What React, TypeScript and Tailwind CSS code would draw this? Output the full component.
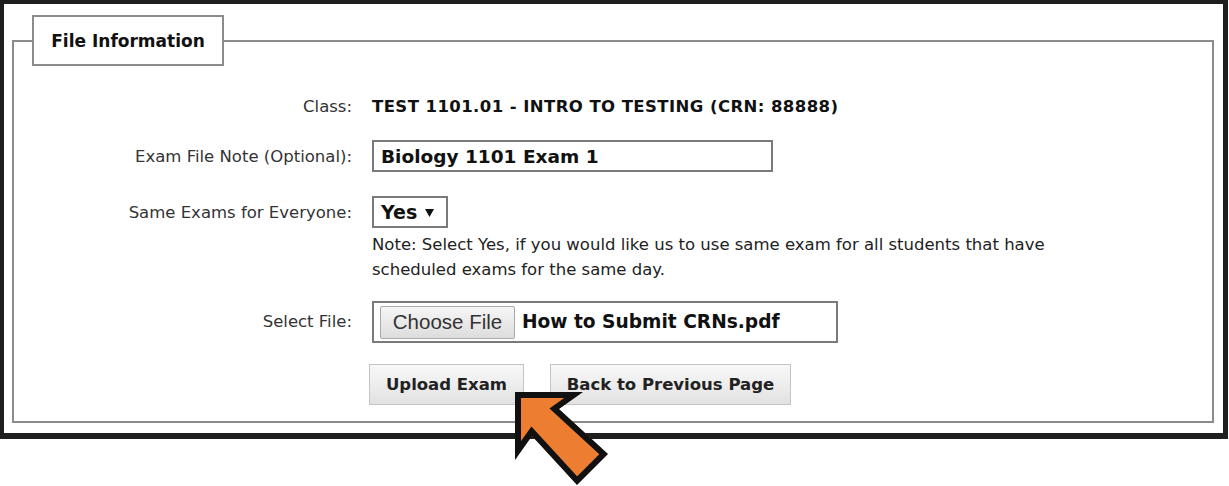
import React from "react";

const F = { fontFamily: '"DejaVu Sans", Verdana, sans-serif' } as const;

function Arrow() {
  const pts = "0,0 68,0 44,17 93,62 62,93 17,44 0,68";
  return (
    <svg
      className="absolute left-[515px] top-[392px]"
      width="95"
      height="95"
      viewBox="0 0 95 95"
    >
      <defs>
        <clipPath id="arrowClip">
          <polygon points={pts} />
        </clipPath>
      </defs>
      <polygon
        points={pts}
        fill="#ED7D31"
        stroke="#111"
        strokeWidth="12"
        strokeLinejoin="miter"
        clipPath="url(#arrowClip)"
      />
    </svg>
  );
}

export default function App() {
  return (
    <div className="relative w-[1229px] h-[486px] bg-white" style={F}>
      <div className="w-[1228px] h-[439px] border-t-4 border-l-4 border-r-[5px] border-b-[6px] border-[#1e1e1e] pt-[11px] pl-[8px] pr-[9px] pb-[10px]">
        <fieldset className="h-full border-2 border-[#8c8c8c] m-0 p-0">
          <legend className="ml-[18px] w-[192px] h-[51px] border-2 border-[#8c8c8c] bg-white flex items-center justify-center pt-[3px] text-[17px] font-bold text-[#111]">
            File Information
          </legend>

          <div className="grid grid-cols-[338px_1fr] gap-x-5 text-[16.5px] text-[#333]">
            {/* Class */}
            <div className="mt-[31px] text-right leading-5">Class:</div>
            <div className="mt-[31px] leading-5 font-bold text-[#111] text-[16.5px] tracking-[0.42px]">
              TEST 1101.01 - INTRO TO TESTING (CRN: 88888)
            </div>

            {/* Exam file note */}
            <div className="mt-[23px] h-[32px] flex items-center justify-end pt-[2px]">
              Exam File Note (Optional):
            </div>
            <div className="mt-[23px]">
              <div className="w-[401px] h-[32px] border-2 border-[#7a7a7a] flex items-center pl-[7px] pt-[1px] font-bold text-[18.5px] text-[#111]">
                Biology 1101 Exam 1
              </div>
            </div>

            {/* Same exams */}
            <div className="mt-[24px] h-[32px] flex items-center justify-end pt-[3px]">
              Same Exams for Everyone:
            </div>
            <div className="mt-[24px]">
              <div className="w-[76px] h-[32px] border-2 border-[#7a7a7a] flex items-center pl-[7px] pt-[1px] font-bold text-[19px] text-[#111]">
                <span>Yes</span>
                <svg className="ml-[8px]" width="9" height="8" viewBox="0 0 9 8">
                  <polygon points="0,0 9,0 4.5,8" fill="#111" />
                </svg>
              </div>
              <div className="mt-[4px] leading-[25px] text-[16.5px] text-[#222]">
                Note: Select Yes, if you would like us to use same exam for all students that have
                <br />
                scheduled exams for the same day.
              </div>
            </div>

            {/* Select file */}
            <div className="mt-[19px] h-[42px] flex items-center justify-end">
              Select File:
            </div>
            <div className="mt-[19px]">
              <div className="w-[466px] h-[42px] border-2 border-[#7a7a7a] flex items-center pl-[6px]">
                <div
                  className="w-[135px] h-[33px] border border-[#a9a9a9] rounded-[2px] bg-gradient-to-b from-[#f6f6f6] to-[#dddddd] flex items-center justify-center text-[20.5px] text-[#333]"
                  style={{ fontFamily: '"Liberation Sans", Arial, sans-serif' }}
                >
                  Choose File
                </div>
                <span className="ml-[7px] font-bold text-[18.6px] text-[#111]">
                  How to Submit CRNs.pdf
                </span>
              </div>
            </div>

            {/* Buttons */}
            <div />
            <div className="mt-[21px] -ml-[3px] flex gap-[26px]">
              <div className="w-[155px] h-[41px] border border-[#c4c4c4] bg-gradient-to-b from-[#f8f8f8] to-[#e2e2e2] flex items-center justify-center pt-[2px] font-bold text-[16.5px] text-[#222]">
                Upload Exam
              </div>
              <div className="w-[241px] h-[41px] border border-[#c4c4c4] bg-gradient-to-b from-[#f8f8f8] to-[#e2e2e2] flex items-center justify-center pt-[2px] font-bold text-[16.5px] text-[#222]">
                Back to Previous Page
              </div>
            </div>
          </div>
        </fieldset>
      </div>
      <Arrow />
    </div>
  );
}
